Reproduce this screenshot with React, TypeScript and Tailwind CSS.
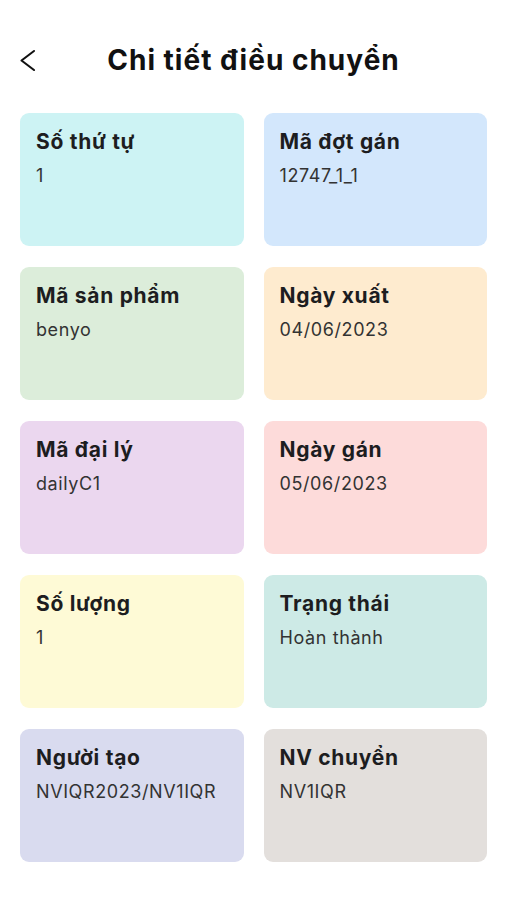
import React from "react";

const items: { label: string; value: string; bg: string }[] = [
  { label: "Số thứ tự", value: "1", bg: "bg-[#cdf3f4]" },
  { label: "Mã đợt gán", value: "12747_1_1", bg: "bg-[#d3e7fc]" },
  { label: "Mã sản phẩm", value: "benyo", bg: "bg-[#dcedda]" },
  { label: "Ngày xuất", value: "04/06/2023", bg: "bg-[#feebcf]" },
  { label: "Mã đại lý", value: "dailyC1", bg: "bg-[#ebd7ef]" },
  { label: "Ngày gán", value: "05/06/2023", bg: "bg-[#fddbda]" },
  { label: "Số lượng", value: "1", bg: "bg-[#fefad6]" },
  { label: "Trạng thái", value: "Hoàn thành", bg: "bg-[#cdeae6]" },
  { label: "Người tạo", value: "NVIQR2023/NV1IQR", bg: "bg-[#d9dbef]" },
  { label: "NV chuyển", value: "NV1IQR", bg: "bg-[#e3dfdc]" },
];

export default function App() {
  return (
    <div
      className="min-h-[900px] w-[507px] bg-white"
      style={{ fontFamily: "Inter, 'Noto Sans', sans-serif" }}
    >
      <div className="relative flex h-[113px] items-start justify-center pt-[40px]">
        <button className="absolute left-[18px] top-[48px] flex h-[25px] w-[20px] items-center justify-center">
          <svg width="20" height="25" viewBox="0 0 20 25" fill="none">
            <path d="M16 3 L3.5 12.5 L16 22" stroke="#111" strokeWidth="2.1" strokeLinecap="round" strokeLinejoin="round" />
          </svg>
        </button>
        <h1 className="text-[28px] font-bold leading-[40px] tracking-[1px] text-[#111]">Chi tiết điều chuyển</h1>
      </div>
      <div className="grid grid-cols-2 gap-x-[20px] gap-y-[21px] px-[20px]">
        {items.map((it) => (
          <div key={it.label} className={`h-[133px] rounded-[9px] px-[16px] pt-[15px] ${it.bg}`}>
            <div className="text-[21px] font-bold leading-[28px] tracking-[0.7px] text-[#1d1d1f]">{it.label}</div>
            <div className="mt-[8px] text-[18px] leading-[24px] tracking-[0.6px] text-[#333]">{it.value}</div>
          </div>
        ))}
      </div>
    </div>
  );
}
